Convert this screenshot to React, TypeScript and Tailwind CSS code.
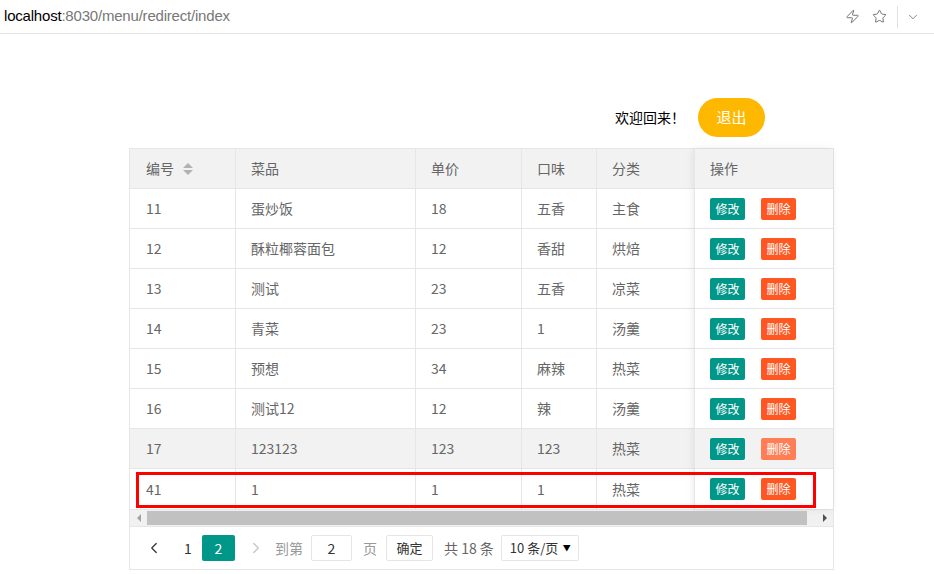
import { ChevronLeft, ChevronRight, Zap, Star, ChevronDown } from "lucide-react";

const ROWS = [
  { id: "11", name: "蛋炒饭", price: "18", taste: "五香", type: "主食" },
  { id: "12", name: "酥粒椰蓉面包", price: "12", taste: "香甜", type: "烘焙" },
  { id: "13", name: "测试", price: "23", taste: "五香", type: "凉菜" },
  { id: "14", name: "青菜", price: "23", taste: "1", type: "汤羹" },
  { id: "15", name: "预想", price: "34", taste: "麻辣", type: "热菜" },
  { id: "16", name: "测试12", price: "12", taste: "辣", type: "汤羹" },
  { id: "17", name: "123123", price: "123", taste: "123", type: "热菜", hover: true },
  { id: "41", name: "1", price: "1", taste: "1", type: "热菜" },
];

const font = { fontFamily: "'Noto Sans CJK SC', 'Liberation Sans', sans-serif" };

function SortIcon() {
  return (
    <span className="ml-[9px] inline-flex flex-col gap-[2px]">
      <span className="h-0 w-0 border-x-[5px] border-b-[5px] border-x-transparent border-b-[#b2b2b2]" />
      <span className="h-0 w-0 border-x-[5px] border-t-[5px] border-x-transparent border-t-[#b2b2b2]" />
    </span>
  );
}

const cols = "grid grid-cols-[106px_180px_106px_75px_97px]";

export default function App() {
  return (
    <div className="min-h-screen bg-white text-[14px] text-[#666]" style={font}>
      {/* Browser bar */}
      <div className="flex h-[34px] items-center justify-between border-b border-[#e2e2e2] pl-[4px] pr-[14px]">
        <div className="text-[15px] tracking-[-0.2px]" style={{ fontFamily: "'Liberation Sans', sans-serif" }}>
          <span className="text-black">localhost</span>
          <span className="text-[#777]">:8030/menu/redirect/index</span>
        </div>
        <div className="flex items-center text-[#555]">
          <Zap className="mr-[12px] h-[15px] w-[15px]" strokeWidth={1.3} />
          <Star className="mr-[10px] h-[15px] w-[15px]" strokeWidth={1.3} />
          <div className="mr-[8px] h-[22px] w-px bg-[#e0e0e0]" />
          <ChevronDown className="h-[14px] w-[14px]" strokeWidth={1.2} />
        </div>
      </div>

      <div className="pl-[129px] pt-[64px]">
        {/* Welcome */}
        <div className="flex w-[636px] items-center justify-end gap-[13px]">
          <span className="text-[14px] text-black">欢迎回来！</span>
          <button className="flex h-[39px] w-[67px] items-center justify-center rounded-full bg-[#FFB800] text-[15px] text-white">
            退出
          </button>
        </div>

        {/* Table */}
        <div className="relative mt-[11px] w-[705px] border border-[#e6e6e6]">
          <div className="flex">
            <div className="flex-1">
              <div className={`${cols} h-[40px] border-b border-[#e6e6e6] bg-[#f2f2f2]`}>
                <div className="flex items-center border-r border-[#e6e6e6] pl-[16px]">编号<SortIcon /></div>
                <div className="flex items-center border-r border-[#e6e6e6] pl-[15px]">菜品</div>
                <div className="flex items-center border-r border-[#e6e6e6] pl-[15px]">单价</div>
                <div className="flex items-center border-r border-[#e6e6e6] pl-[15px]">口味</div>
                <div className="flex items-center pl-[15px]">分类</div>
              </div>
              {ROWS.map((r, i) => (
                <div
                  key={r.id}
                  className={`${cols} h-[40px] ${i < ROWS.length - 1 ? "border-b" : ""} border-[#e6e6e6] ${r.hover ? "bg-[#f2f2f2]" : ""}`}
                >
                  <div className="flex items-center border-r border-[#e6e6e6] pl-[16px]">{r.id}</div>
                  <div className="flex items-center border-r border-[#e6e6e6] pl-[15px]">{r.name}</div>
                  <div className="flex items-center border-r border-[#e6e6e6] pl-[15px]">{r.price}</div>
                  <div className="flex items-center border-r border-[#e6e6e6] pl-[15px]">{r.taste}</div>
                  <div className="flex items-center pl-[15px]">{r.type}</div>
                </div>
              ))}
            </div>
            {/* Fixed right column */}
            <div className="w-[140px] shadow-[-1px_0_8px_rgba(0,0,0,0.08)]">
              <div className="flex h-[40px] items-center border-b border-l border-[#e6e6e6] bg-[#f2f2f2] pl-[15px]">操作</div>
              {ROWS.map((r, i) => (
                <div
                  key={r.id}
                  className={`flex h-[40px] items-center gap-[16px] border-l ${i < ROWS.length - 1 ? "border-b" : ""} border-[#e6e6e6] pl-[15px] ${r.hover ? "bg-[#f2f2f2]" : "bg-white"}`}
                >
                  <button className="flex h-[22px] w-[35px] items-center justify-center rounded-[2px] bg-[#009688] text-[12px] text-white">修改</button>
                  <button className={`flex h-[22px] w-[35px] items-center justify-center rounded-[2px] text-[12px] text-white ${r.hover ? "bg-[#FF7E55]" : "bg-[#FF5722]"}`}>删除</button>
                </div>
              ))}
            </div>
          </div>

          {/* Scrollbar */}
          <div className="flex h-[17px] items-center border-t border-[#e6e6e6] bg-[#f1f1f1]">
            <div className="flex w-[17px] items-center justify-center">
              <span className="h-0 w-0 border-y-[4px] border-r-[4px] border-y-transparent border-r-[#a3a3a3]" />
            </div>
            <div className="h-[14px] w-[660px] bg-[#c1c1c1]" />
            <div className="flex-1" />
            <div className="flex w-[17px] items-center justify-center">
              <span className="h-0 w-0 border-y-[4px] border-l-[4px] border-y-transparent border-l-[#505050]" />
            </div>
          </div>

          {/* Red highlight annotation */}
          <div className="pointer-events-none absolute left-[6px] top-[323px] h-[36px] w-[680px] border-[3px] border-[#ff0000]" />
        </div>

        {/* Pagination */}
        <div className="flex h-[43px] w-[705px] items-center whitespace-nowrap border-x border-b border-[#e6e6e6] pl-[15px] text-[14px]">
          <ChevronLeft className="h-[18px] w-[18px] text-[#333]" strokeWidth={1.6} />
          <span className="ml-[21px] w-[10px] text-[#333]">1</span>
          <span className="ml-[8px] flex h-[26px] w-[33px] items-center justify-center rounded-[2px] bg-[#009688] text-white">2</span>
          <ChevronRight className="ml-[12px] h-[18px] w-[18px] text-[#c2c2c2]" strokeWidth={1.6} />
          <span className="ml-[10px] text-[#999]">到第</span>
          <span className="ml-[8px] flex h-[26px] w-[41px] items-center justify-center rounded-[2px] border border-[#e6e6e6] text-[#333]">2</span>
          <span className="ml-[11px] text-[#999]">页</span>
          <span className="ml-[9px] flex h-[26px] w-[47px] items-center justify-center rounded-[2px] border border-[#e6e6e6] text-[13px] text-[#333]">确定</span>
          <span className="ml-[11px] text-[#666]">共 18 条</span>
          <span className="ml-[7px] flex h-[26px] w-[78px] shrink-0 items-center justify-between whitespace-nowrap rounded-[2px] border border-[#e6e6e6] pl-[8px] pr-[7px] text-[13px] text-[#333]">
            <span>10 条/页</span>
            <span className="text-[8px] text-black">▼</span>
          </span>
        </div>
      </div>
    </div>
  );
}
